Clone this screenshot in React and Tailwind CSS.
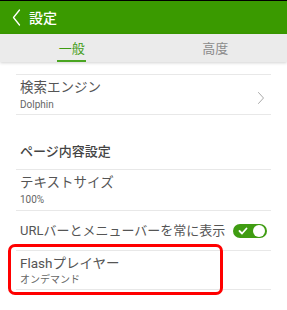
import React from "react";

const font = { fontFamily: "Roboto, 'Noto Sans CJK JP', sans-serif" };

function Chevron({ className }) {
  return (
    <svg className={className} viewBox="0 0 8 14" fill="none" stroke="currentColor" strokeWidth="1" strokeLinecap="round" strokeLinejoin="round">
      <path d="M1.5 1.5 L6.5 7 L1.5 12.5" />
    </svg>
  );
}

export default function App() {
  return (
    <div className="w-[287px] h-[310px] bg-white overflow-hidden" style={font}>
      <div className="h-[1px] bg-black" />
      <div className="h-[33px] bg-[#3a9a00] flex items-center">
        <svg className="ml-[12px] w-[9px] h-[17px] text-white" viewBox="0 0 9 17" fill="none" stroke="currentColor" strokeWidth="1.3" strokeLinecap="round" strokeLinejoin="round">
          <path d="M7.5 1 L1.5 8.5 L7.5 16" />
        </svg>
        <span className="ml-[8px] text-white text-[14px] leading-none font-medium">設定</span>
      </div>
      <div className="relative h-[28px] bg-[#ebebeb] flex shadow-[0_1px_3px_rgba(0,0,0,0.18)]">
        <div className="w-1/2 flex justify-center">
          <div className="relative w-[29px] flex items-center justify-center">
            <span className="text-[13px] text-[#3e9b12] leading-none">一般</span>
            <div className="absolute left-0 right-0 bottom-0 h-[2px] bg-[#4aa521]" />
          </div>
        </div>
        <div className="w-1/2 flex items-center justify-center">
          <span className="text-[13px] text-[#8a8a8a] leading-none">高度</span>
        </div>
      </div>
      <div className="mx-[16px] mt-[12px] flex flex-col">
        <div className="border-t border-[#e8e8e8] h-[40px] flex items-center justify-between pl-[4px] pr-[6px]">
          <div className="flex flex-col">
            <span className="text-[13.5px] leading-[17px] text-[#555]">検索エンジン</span>
            <span className="text-[10px] leading-[13px] text-[#666] mt-[2px]">Dolphin</span>
          </div>
          <Chevron className="w-[8px] h-[14px] text-[#aaa] mt-[6px]" />
        </div>
        <div className="border-t border-[#e8e8e8] h-[55px] flex items-end pb-[11px] pl-[4px]">
          <span className="text-[13px] leading-none text-[#444] font-medium">ページ内容設定</span>
        </div>
        <div className="border-t border-[#e8e8e8] h-[41px] flex flex-col justify-center pl-[4px]">
          <span className="text-[13.5px] leading-[17px] text-[#555]">テキストサイズ</span>
          <span className="text-[10px] leading-[13px] text-[#666] mt-[2px]">100%</span>
        </div>
        <div className="border-t border-[#e8e8e8] h-[40px] flex items-center justify-between pl-[4px] pr-[4px]">
          <span className="text-[13px] leading-none text-[#555] whitespace-nowrap">URLバーとメニューバーを常に表示</span>
          <div className="shrink-0 w-[34px] h-[14px] rounded-full bg-[#3f9c12] flex items-center justify-between px-[2px]">
            <svg className="w-[10px] h-[8px] ml-[3px]" viewBox="0 0 10 8" fill="none" stroke="white" strokeWidth="1.8" strokeLinecap="round" strokeLinejoin="round">
              <path d="M1.5 4 L4 6.5 L8.5 1.5" />
            </svg>
            <div className="w-[12px] h-[12px] rounded-full bg-white" />
          </div>
        </div>
        <div className="relative border-t border-b border-[#e8e8e8] h-[40px] flex flex-col justify-center pl-[4px]">
          <span className="text-[13.5px] leading-[17px] text-[#555]">Flashプレイヤー</span>
          <span className="text-[10px] leading-[13px] text-[#666] mt-[1px]">オンデマンド</span>
          <div className="absolute left-[-8px] top-[-7px] w-[215px] h-[51px] border-[3px] border-[#ff0000] rounded-[7px]" />
        </div>
      </div>
    </div>
  );
}
